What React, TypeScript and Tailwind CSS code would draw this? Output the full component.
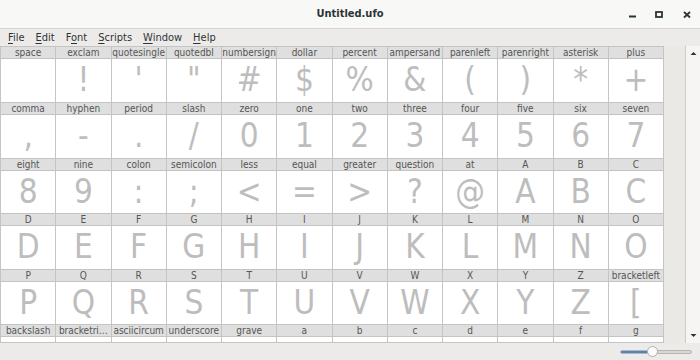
import React from 'react';

// glyph name, glyph char
type Glyph = [string, string];

const ROWS: Glyph[][] = [
  [
    ['space', ''], ['exclam', '!'], ['quotesingle', "'"], ['quotedbl', '"'],
    ['numbersign', '#'], ['dollar', '$'], ['percent', '%'], ['ampersand', '&'],
    ['parenleft', '('], ['parenright', ')'], ['asterisk', '*'], ['plus', '+'],
  ],
  [
    ['comma', ','], ['hyphen', '-'], ['period', '.'], ['slash', '/'],
    ['zero', '0'], ['one', '1'], ['two', '2'], ['three', '3'],
    ['four', '4'], ['five', '5'], ['six', '6'], ['seven', '7'],
  ],
  [
    ['eight', '8'], ['nine', '9'], ['colon', ':'], ['semicolon', ';'],
    ['less', '<'], ['equal', '='], ['greater', '>'], ['question', '?'],
    ['at', '@'], ['A', 'A'], ['B', 'B'], ['C', 'C'],
  ],
  [
    ['D', 'D'], ['E', 'E'], ['F', 'F'], ['G', 'G'], ['H', 'H'], ['I', 'I'],
    ['J', 'J'], ['K', 'K'], ['L', 'L'], ['M', 'M'], ['N', 'N'], ['O', 'O'],
  ],
  [
    ['P', 'P'], ['Q', 'Q'], ['R', 'R'], ['S', 'S'], ['T', 'T'], ['U', 'U'],
    ['V', 'V'], ['W', 'W'], ['X', 'X'], ['Y', 'Y'], ['Z', 'Z'], ['bracketleft', '['],
  ],
  // last row is scrolled mostly out of view, glyphs not visible
  [
    ['backslash', ''], ['bracketri…', ''], ['asciicircum', ''], ['underscore', ''],
    ['grave', ''], ['a', ''], ['b', ''], ['c', ''],
    ['d', ''], ['e', ''], ['f', ''], ['g', ''],
  ],
];

// rows are not all the same height in the shot (55.7px pitch)
const SHORT_ROWS = [2, 4];

const MENU: [string, string, string][] = [
  ['', 'F', 'ile'],
  ['', 'E', 'dit'],
  ['F', 'o', 'nt'],
  ['', 'S', 'cripts'],
  ['', 'W', 'indow'],
  ['', 'H', 'elp'],
];

function GlyphCell({ name, char, short }: { name: string; char: string; short: boolean }) {
  return (
    <div className="flex flex-col border-r border-[#c4c4c4] min-w-0">
      <div className="h-[12px] border-t border-[#c4c4c4] bg-[#dfdfdf] text-center text-[10px] leading-[11px] text-[#555555] whitespace-nowrap overflow-hidden">
        {name}
      </div>
      <div
        className={
          short
            ? 'h-[43px] border-t border-[#c4c4c4] bg-white text-center text-[33px] leading-[41px] text-[#bdbdbd]'
            : 'h-[44px] border-t border-[#c4c4c4] bg-white text-center text-[33px] leading-[42px] text-[#bdbdbd]'
        }
      >
        {char}
      </div>
    </div>
  );
}

export default function App() {
  return (
    <div className="w-[700px] h-[360px] flex flex-col overflow-hidden bg-[#edebe9] font-['DejaVu_Sans_Condensed','DejaVu_Sans',sans-serif] font-stretch-condensed text-[#2e3436]">
      {/* Title bar */}
      <div className="relative h-[29px] shrink-0 bg-[#f8f8f7] border-b border-[#d6d3cf] flex items-center justify-center">
        <span className="text-[11px] font-bold text-[#2e3436]">Untitled.ufo</span>
        <div className="absolute right-0 top-0 h-full flex items-center">
          <svg width="28" height="28" viewBox="0 0 28 28">
            <rect x="13" y="15.5" width="7" height="2" fill="#2e3436" />
          </svg>
          <svg width="28" height="28" viewBox="0 0 28 28">
            <rect x="12" y="12" width="6" height="5" fill="none" stroke="#2e3436" strokeWidth="1.8" />
          </svg>
          <svg width="28" height="28" viewBox="0 0 28 28">
            <path d="M12 12 L18 17.5 M18 12 L12 17.5" stroke="#2e3436" strokeWidth="1.8" />
          </svg>
        </div>
      </div>

      {/* Menu bar */}
      <div className="h-[17px] shrink-0 flex items-center gap-[11px] pl-[8px] text-[11px] leading-[17px] text-[#2e3436]">
        {MENU.map(([pre, key, rest]) => (
          <span key={pre + key + rest}>
            {pre}
            <span className="underline underline-offset-[2px]">{key}</span>
            {rest}
          </span>
        ))}
      </div>

      {/* Glyph grid + scrollbar */}
      <div className="h-[297px] shrink-0 flex">
        <div className="w-[664px] h-full overflow-hidden border-l border-b border-[#c4c4c4] bg-white">
          {ROWS.map((row, i) => (
            <div key={i} className="grid grid-cols-12">
              {row.map(([name, char]) => (
                <GlyphCell key={name} name={name} char={char} short={SHORT_ROWS.includes(i)} />
              ))}
            </div>
          ))}
        </div>
        <div className="flex-1 bg-[#ebe9e6]" />
        <div className="w-[15px] h-full border-l border-[#cfccc8] bg-[#f6f5f4] flex flex-col items-center justify-between py-[4px]">
          <svg width="7" height="5" viewBox="0 0 7 5" className="mt-[1px]">
            <path d="M0.5 4 L3.5 1 L6.5 4 Z" fill="#2e3436" />
          </svg>
          <svg width="7" height="5" viewBox="0 0 7 5" className="mb-[1px]">
            <path d="M0.5 1 L3.5 4 L6.5 1 Z" fill="#2e3436" />
          </svg>
        </div>
      </div>

      {/* Status bar with zoom slider */}
      <div className="h-[17px] shrink-0 flex items-center justify-end pr-[8px]">
        <div className="relative w-[72px] h-[11px] flex items-center">
          <div className="w-full h-[4px] rounded-full bg-[#d8d6d3] border border-[#b9b6b2] overflow-hidden">
            <div className="w-[30px] h-full bg-[#4a86c8]" />
          </div>
          <div className="absolute left-[27px] top-0 w-[11px] h-[11px] rounded-full bg-[#fbfbfa] border border-[#b3b0ab]" />
        </div>
      </div>
    </div>
  );
}
